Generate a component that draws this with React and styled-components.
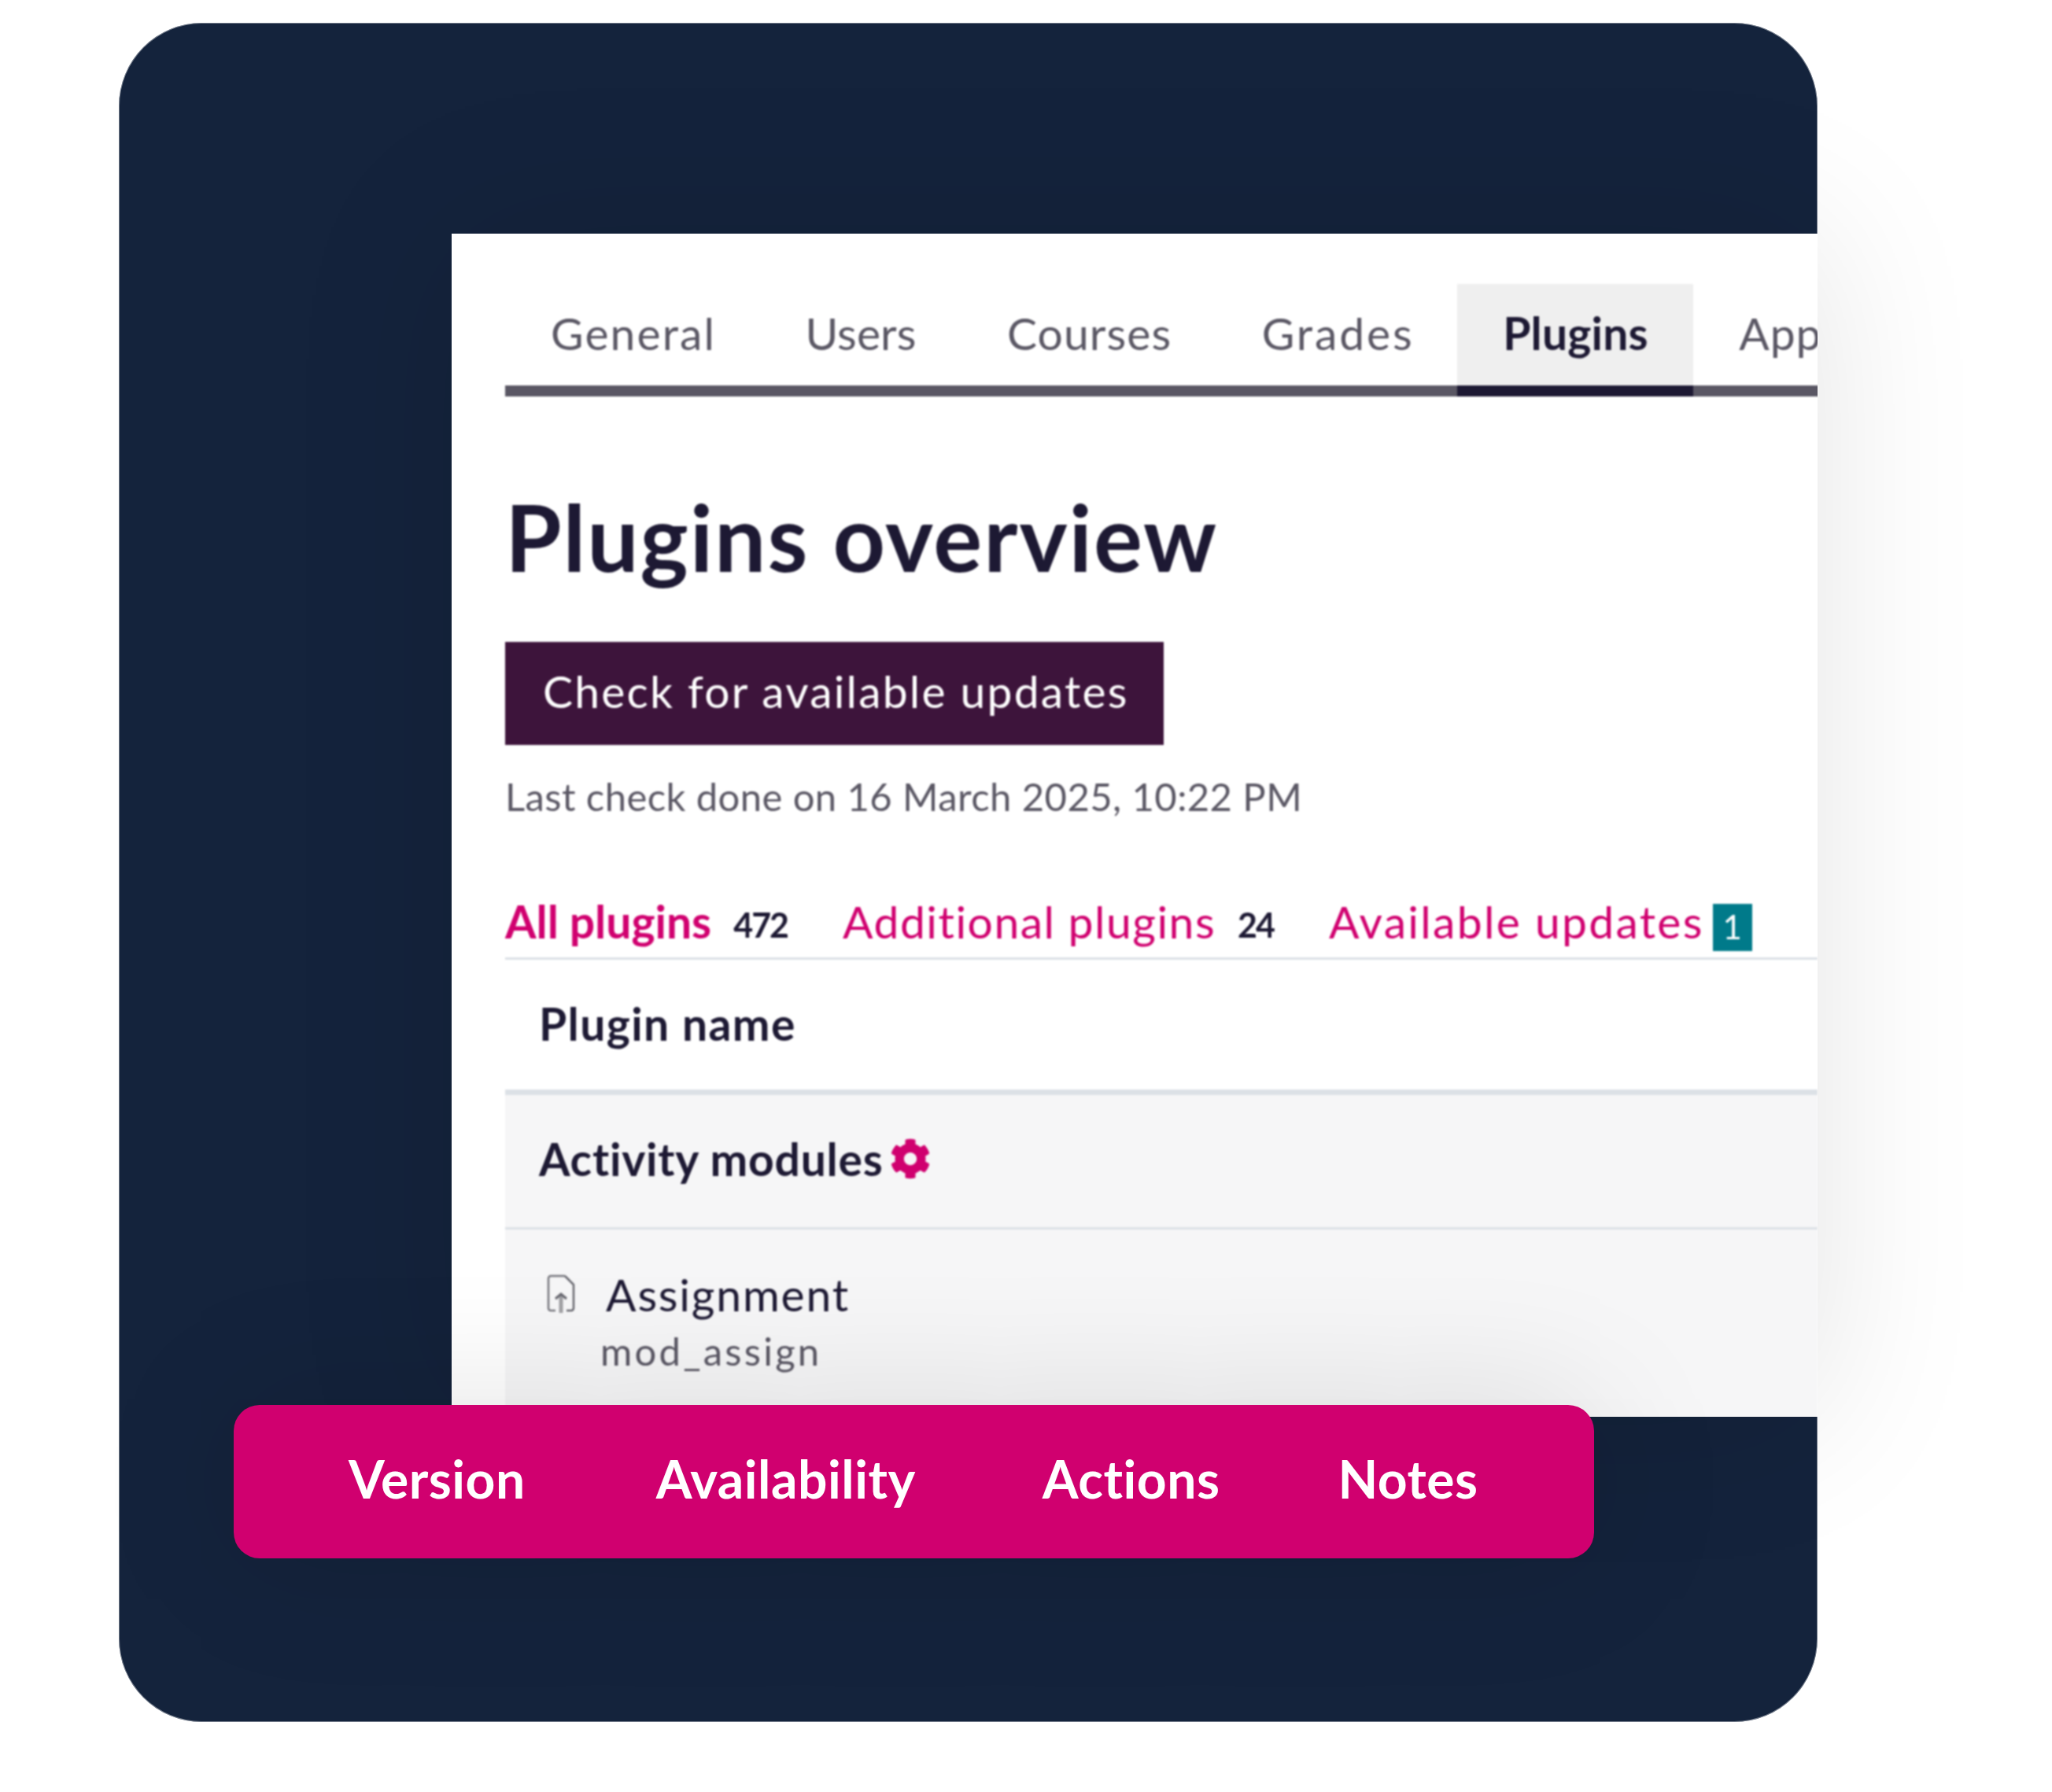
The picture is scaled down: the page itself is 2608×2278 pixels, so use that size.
import React from 'react';
import styled, { createGlobalStyle } from 'styled-components';
import { FaCog } from 'react-icons/fa';

const GlobalStyle = createGlobalStyle`
  html, body {
    margin: 0;
    padding: 0;
    background: #fff;
    font-family: Lato, "Noto Sans", sans-serif;
  }
`;

const tabs = [
  { label: 'General', spacing: 2.1 },
  { label: 'Users', spacing: 0.1 },
  { label: 'Courses', spacing: 1.1 },
  { label: 'Grades', spacing: 2.9 },
  { label: 'Plugins', spacing: 0.2, active: true },
  { label: 'Appearance', spacing: 1 },
];

const columns = [
  { label: 'Version', gap: 166 },
  { label: 'Availability', gap: 161 },
  { label: 'Actions', gap: 150 },
  { label: 'Notes', gap: 0 },
];

const App = () => (
  <Page>
    <GlobalStyle />
    <Card>
      <Panel>
        <Screen>
          <TabBar>
            {tabs.map(tab => (
              <Tab key={tab.label} $active={tab.active} $spacing={tab.spacing}>{tab.label}</Tab>
            ))}
          </TabBar>
          <Title>Plugins overview</Title>
          <CheckButton>Check for available updates</CheckButton>
          <LastCheck>Last check done on 16 March 2025, 10:22 PM</LastCheck>
          <FilterRow>
            <Filter>
              <FilterLink $active $spacing={0}>All plugins</FilterLink>
              <Count>472</Count>
            </Filter>
            <Filter>
              <FilterLink $spacing={1.5}>Additional plugins</FilterLink>
              <Count>24</Count>
            </Filter>
            <Filter $tight>
              <FilterLink $spacing={2.3}>Available updates</FilterLink>
              <Badge>1</Badge>
            </Filter>
          </FilterRow>
          <HeadRow>Plugin name</HeadRow>
          <GroupRow>
            Activity modules
            <GearIcon />
          </GroupRow>
          <PluginRow>
            <PluginName>
              <FileIcon viewBox="0 0 38 50">
                <path d="M24 2H6a3 3 0 0 0-3 3v38a3 3 0 0 0 3 3h6" fill="none" stroke="#77777e" strokeWidth="2.5" />
                <path d="M26 46h6a3 3 0 0 0 3-3V13L24 2" fill="none" stroke="#66666e" strokeWidth="2.5" />
                <path d="M19 49V26" fill="none" stroke="#a0a0a4" strokeWidth="5" />
                <path d="M12 31l7-6 7 6" fill="none" stroke="#66666e" strokeWidth="3" />
              </FileIcon>
              Assignment
            </PluginName>
            <PluginCode>mod_assign</PluginCode>
          </PluginRow>
        </Screen>
      </Panel>
      <ColumnBar>
        {columns.map(col => (
          <ColumnLabel key={col.label} $gap={col.gap}>{col.label}</ColumnLabel>
        ))}
      </ColumnBar>
    </Card>
  </Page>
);

const Page = styled.div`
  width: 2608px;
  height: 2278px;
  padding: 29px 0 0 151px;
  box-sizing: border-box;
  overflow: hidden;
`;

const Card = styled.div`
  position: relative;
  width: 2159px;
  height: 2160px;
  box-sizing: border-box;
  padding: 268px 0 0 423px;
  background: #14233c;
  border-radius: 106px;
  box-shadow: inset 0 0 0 1px rgba(255, 255, 255, 0.4);
`;

const Panel = styled.div`
  height: 1504px;
  background: #fff;
  box-shadow: 0 0 200px rgba(0, 0, 0, 0.11);
  overflow: hidden;
`;

const Screen = styled.div`
  padding: 64px 0 0 68px;
  height: 100%;
  box-sizing: border-box;
  filter: blur(0.9px);
`;

const TabBar = styled.div`
  display: flex;
  height: 143px;
  width: 2000px;
  border-bottom: 14px solid #5a5764;
  box-sizing: border-box;
`;

const Tab = styled.div`
  height: 143px;
  box-sizing: border-box;
  padding: 0 calc(57.5px - ${p => p.$spacing}px) ${p => (p.$active ? '6px' : '20px')} 58px;
  display: flex;
  align-items: center;
  font-size: 57px;
  letter-spacing: ${p => p.$spacing}px;
  white-space: nowrap;
  color: ${p => (p.$active ? '#1d1933' : '#5a5764')};
  font-weight: ${p => (p.$active ? 700 : 400)};
  background: ${p => (p.$active ? '#efefef' : 'transparent')};
  border-bottom: ${p => (p.$active ? '14px solid #1d1933' : 'none')};
`;

const Title = styled.h1`
  margin: 112px 0 0;
  font-size: 116px;
  line-height: 134px;
  font-weight: 700;
  color: #1d1933;
  letter-spacing: 1.9px;
`;

const CheckButton = styled.div`
  margin-top: 66px;
  width: 837px;
  height: 131px;
  box-sizing: border-box;
  padding: 0 0 8px 48px;
  display: flex;
  align-items: center;
  background: #3d143b;
  color: #fff;
  font-size: 57px;
  letter-spacing: 2.2px;
  white-space: nowrap;
`;

const LastCheck = styled.div`
  margin-top: 37px;
  font-size: 49px;
  line-height: 56px;
  color: #5a5764;
  letter-spacing: 0.4px;
  white-space: nowrap;
`;

const FilterRow = styled.div`
  margin-top: 104px;
  height: 76px;
  box-sizing: border-box;
  border-bottom: 3px solid #dce1e6;
  display: flex;
  align-items: flex-start;
  gap: 70px;
`;

const Filter = styled.div`
  display: flex;
  align-items: center;
  gap: ${p => (p.$tight ? '11px' : '28px')};
  height: 60px;
`;

const FilterLink = styled.span`
  font-size: 57px;
  line-height: 60px;
  padding-bottom: 6px;
  letter-spacing: ${p => p.$spacing}px;
  white-space: nowrap;
  color: #d0006f;
  font-weight: ${p => (p.$active ? 700 : 400)};
`;

const Count = styled.span`
  font-size: 43px;
  font-weight: 700;
  letter-spacing: -2px;
  color: #1d1933;
  padding-top: 2px;
`;

const Badge = styled.span`
  width: 50px;
  height: 60px;
  margin-top: 10px;
  padding-bottom: 3px;
  box-sizing: border-box;
  flex: none;
  display: flex;
  align-items: center;
  justify-content: center;
  background: #007a8a;
  color: #fff;
  font-size: 42px;
`;

const HeadRow = styled.div`
  height: 172px;
  padding: 0 0 4px 43px;
  box-sizing: border-box;
  display: flex;
  align-items: center;
  font-size: 57px;
  font-weight: 700;
  letter-spacing: 1.4px;
  color: #1d1933;
  border-bottom: 7px solid #dce1e6;
`;

const GroupRow = styled.div`
  height: 171px;
  padding: 0 0 7px 43px;
  box-sizing: border-box;
  display: flex;
  align-items: center;
  gap: 8px;
  font-size: 57px;
  font-weight: 700;
  letter-spacing: 0.8px;
  color: #1d1933;
  background: #f6f6f7;
  border-bottom: 3px solid #dce1e6;
`;

const GearIcon = styled(FaCog)`
  width: 52px;
  height: 52px;
  color: #d0006f;
`;

const PluginRow = styled.div`
  height: 238px;
  padding: 49px 0 0 43px;
  box-sizing: border-box;
  background: #f6f6f7;
`;

const PluginName = styled.div`
  display: flex;
  align-items: center;
  gap: 38px;
  padding-left: 9px;
  font-size: 57px;
  line-height: 66px;
  letter-spacing: 1.8px;
  color: #1d1933;
`;

const FileIcon = styled.svg`
  width: 38px;
  height: 50px;
`;

const PluginCode = styled.div`
  margin: 11px 0 0 78px;
  font-size: 49px;
  line-height: 56px;
  letter-spacing: 3.2px;
  color: #5a5764;
`;

const ColumnBar = styled.div`
  position: absolute;
  left: 146px;
  top: 1757px;
  width: 1729px;
  height: 195px;
  padding: 0 0 8px 146px;
  box-sizing: border-box;
  display: flex;
  align-items: center;
  background: #d0006f;
  border-radius: 33px;
  box-shadow: 0 0 180px rgba(0, 0, 0, 0.13);
`;

const ColumnLabel = styled.div`
  font-size: 66px;
  font-weight: 700;
  letter-spacing: 0.5px;
  color: #fff;
  margin-right: ${p => p.$gap}px;
`;

export default App;
